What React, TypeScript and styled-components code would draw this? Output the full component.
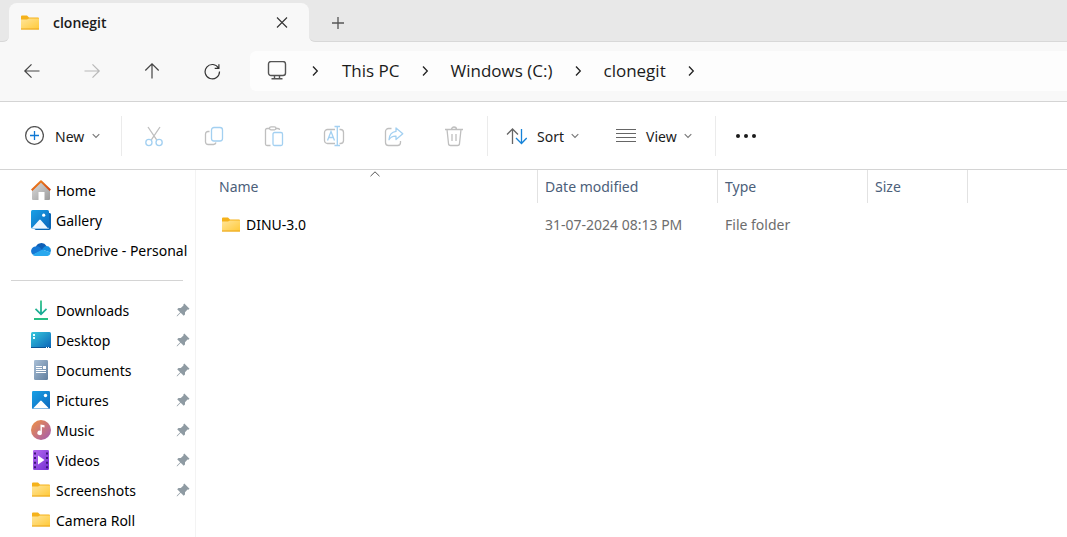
import React from 'react';
import styled, { createGlobalStyle } from 'styled-components';

const GlobalStyle = createGlobalStyle`
  * { box-sizing: border-box; }
  body {
    margin: 0;
    background: #ffffff;
    color: #1b1b1b;
    font-family: 'Noto Sans', 'Open Sans', sans-serif;
    font-size: 14px;
    line-height: 20px;
  }
  svg { display: block; flex: none; }
  button { font: inherit; color: inherit; background: none; border: 0; padding: 0; cursor: pointer; }
  button:disabled { cursor: default; }
`;

const Explorer = styled.div`
  display: flex;
  flex-direction: column;
  min-height: 100vh;
`;

/* Title bar with tabs */
const TabBar = styled.header`
  display: flex;
  height: 42px;
  background: #f8f8f8;
`;

const TabBarStart = styled.div`
  width: 9px;
  background: #e8e8e8;
  border-bottom: 1px solid #d8d8d8;
  border-bottom-right-radius: 6px;
`;

const TabSlot = styled.div`
  flex: 0 1 300px;
  padding-top: 3px;
  background: linear-gradient(#e8e8e8 16px, #f8f8f8 16px);
`;

const Tab = styled.div`
  display: flex;
  align-items: center;
  height: 39px;
  padding: 0 20px 0 11px;
  background: #f8f8f8;
  border-radius: 8px 8px 0 0;
`;

const TabTitle = styled.span`
  flex: 1;
  margin-left: 13px;
  font-family: 'Open Sans', sans-serif;
  font-weight: 600;
`;

const TabBarRest = styled.div`
  display: flex;
  align-items: center;
  flex: 1;
  padding: 4px 0 0 22px;
  background: #e8e8e8;
  border-bottom: 1px solid #d8d8d8;
  border-bottom-left-radius: 6px;
`;

const IconButton = styled.button`
  display: flex;
  align-items: center;
  justify-content: center;
`;

/* Address row */
const NavBar = styled.nav`
  display: flex;
  align-items: flex-start;
  height: 60px;
  padding: 9px 0 0 2px;
  background: #f8f8f8;
  border-bottom: 1px solid #d4d4d4;
`;

const NavButton = styled(IconButton)`
  width: 60px;
  height: 40px;
`;

const AddressBar = styled.ol`
  display: flex;
  align-items: center;
  flex: 1;
  height: 40px;
  margin: 0 0 0 8px;
  padding: 0 0 0 17px;
  list-style: none;
  background: #fdfdfd;
  border-radius: 6px 0 0 6px;
`;

const Crumb = styled.li`
  display: flex;
  align-items: center;
`;

const CrumbLink = styled.a`
  color: #1b1b1b;
  text-decoration: none;
  font-family: 'Open Sans', sans-serif;
  font-size: 17px;
  line-height: 24px;
`;

const CrumbArrow = styled.span<{ $wide?: boolean }>`
  display: flex;
  justify-content: center;
  width: ${({ $wide }) => ($wide ? 55 : 51)}px;
`;

/* Command bar */
const CommandBar = styled.div`
  display: flex;
  align-items: center;
  height: 68px;
  border-bottom: 1px solid #d4d4d4;
`;

const CommandGroup = styled.div<{ $width: number; $gap?: number; $indent?: number }>`
  display: flex;
  align-items: center;
  gap: ${({ $gap = 0 }) => $gap}px;
  width: ${({ $width }) => $width}px;
  height: 40px;
  padding-left: ${({ $indent = 0 }) => $indent}px;
  border-right: 1px solid #ebebeb;
`;

const Command = styled.button<{ $gap: number }>`
  display: flex;
  align-items: center;
  gap: ${({ $gap }) => $gap}px;
  height: 40px;
`;

const CommandLabel = styled.span`
  padding-top: 2px;
  margin-right: -3px;
`;

const ToolButton = styled(IconButton)`
  width: 60px;
  height: 40px;
`;

/* Body */
const Body = styled.div`
  display: flex;
  flex: 1;
`;

const Sidebar = styled.aside`
  flex: 0 0 196px;
  padding-top: 5px;
  border-right: 1px solid #f3f3f3;
`;

const PlaceList = styled.ul`
  margin: 0;
  padding: 0;
  list-style: none;
`;

const Place = styled.li`
  display: flex;
  align-items: center;
  height: 30px;
  padding: 0 5px 0 31px;
`;

const PlaceLink = styled.a`
  display: flex;
  align-items: center;
  gap: 5px;
  flex: 1;
  color: #000000;
  text-decoration: none;
  white-space: nowrap;
`;

const PlaceLabel = styled.span`
  padding-top: 2px;
`;

const Divider = styled.hr`
  height: 1px;
  margin: 15px 12px 14px 11px;
  border: 0;
  background: #d4d4d4;
`;

const Files = styled.main`
  flex: 1;
`;

const FileTable = styled.table`
  table-layout: fixed;
  width: 772px;
  border-collapse: separate;
  border-spacing: 0;
`;

const HeaderCell = styled.th<{ $width: number; $indent?: number }>`
  width: ${({ $width }) => $width}px;
  height: 33px;
  padding: 0 0 0 ${({ $indent = 7 }) => $indent}px;
  border-right: 1px solid #e2e2e2;
  color: #4c607a;
  font-weight: 400;
  text-align: left;
  vertical-align: top;
`;

const SortMark = styled.span`
  display: flex;
  justify-content: center;
  height: 7px;
  padding-top: 1px;
  margin-right: 7px;
`;

const Cell = styled.td<{ $indent?: number }>`
  height: 43px;
  padding: 0 0 0 ${({ $indent = 7 }) => $indent}px;
  color: #6d6d6d;
`;

const FileName = styled.span`
  display: flex;
  align-items: center;
  gap: 5px;
  color: #000000;
`;

/* Icons */
const FolderIcon = () => (
  <svg width="20" height="20" viewBox="0 0 20 20">
    <defs>
      <linearGradient id="folder" x1="0" y1="0" x2="1" y2="1">
        <stop offset="0" stopColor="#ffe59a" />
        <stop offset="1" stopColor="#ffc937" />
      </linearGradient>
    </defs>
    <path d="M1 3.500a1 1 0 0 1 1-1h5l2 2h9a1 1 0 0 1 1 1v3H1z" fill="#f5b21b" />
    <path d="M1 6.500h6l2-1h10v10.500a.5.5 0 0 1-.5.5h-17a.5.5 0 0 1-.5-.5z" fill="url(#folder)" />
    <path d="M1 16h18" stroke="#eaa51c" />
  </svg>
);

const Chevron = ({ down = false }: { down?: boolean }) =>
  down ? (
    <svg width="8" height="6" viewBox="0 0 8 6" fill="none" stroke="#777" strokeWidth="1.100">
      <path d="M.7 1.200 4 4.500l3.300-3.300" />
    </svg>
  ) : (
    <svg width="8" height="12" viewBox="0 0 8 12" fill="none" stroke="#222" strokeWidth="1.300">
      <path d="m2 1.500 4.300 4.500L2 10.500" />
    </svg>
  );

const Arrow = ({ turn = 0, color = '#444' }: { turn?: number; color?: string }) => (
  <svg width="18" height="18" viewBox="0 0 18 18" fill="none" stroke={color} strokeWidth="1.200">
    <path transform={`rotate(${turn} 9 9)`} d="M16.500 9H2M8.500 2.300 1.800 9l6.700 6.700" />
  </svg>
);

const RefreshIcon = () => (
  <svg width="18" height="18" viewBox="0 0 18 18" fill="none" stroke="#333" strokeWidth="1.200">
    <path d="M15.600 6.200A7.200 7.200 0 1 0 16.500 9.500M15.900 2.200V6.300h-4.200" />
  </svg>
);

const MonitorIcon = () => (
  <svg width="20" height="20" viewBox="0 0 20 20" fill="none" stroke="#555" strokeWidth="1.400">
    <rect x="1.500" y=".5" width="17" height="14" rx="2.500" />
    <path d="M7.500 14.500v3M12.500 14.500v3M4.500 17.700h11" />
  </svg>
);

const GREY = '#bfbfbf';
const BLUE = '#a3d0f1';

const tool = (children: React.ReactNode) => (
  <svg width="22" height="22" viewBox="0 0 22 22" fill="none" stroke={GREY} strokeWidth="1.300">
    {children}
  </svg>
);

const tools = [
  {
    label: 'Cut',
    icon: tool(
      <>
        <path d="M5 2l8.700 12.800M17 2 8.300 14.800" />
        <circle cx="5.900" cy="17.500" r="3.100" stroke={BLUE} />
        <circle cx="16.100" cy="17.500" r="3.100" stroke={BLUE} />
      </>
    ),
  },
  {
    label: 'Copy',
    icon: tool(
      <>
        <path d="M6.500 6.500H5a2.500 2.500 0 0 0-2.500 2.500v8A2.700 2.700 0 0 0 5.200 19.500h5.300a2.700 2.700 0 0 0 2.500-2" />
        <rect x="8.500" y="2.500" width="11" height="13.500" rx="2.500" stroke={BLUE} />
      </>
    ),
  },
  {
    label: 'Paste',
    icon: tool(
      <>
        <path d="M6.500 3.500H4A1.500 1.500 0 0 0 2.500 5v14A1.500 1.500 0 0 0 4 20.500h3.500M12.500 3.500H15A1.500 1.500 0 0 1 16.500 5" />
        <rect x="6.500" y="1.800" width="6.500" height="3" rx="1.500" />
        <rect x="10" y="7.500" width="9.500" height="13" rx="1.500" stroke={BLUE} />
      </>
    ),
  },
  {
    label: 'Rename',
    icon: tool(
      <>
        <path d="M12 18.500H4.500a3 3 0 0 1-3-3v-8a3 3 0 0 1 3-3H12M16.500 4.500h1a3 3 0 0 1 3 3v8a3 3 0 0 1-3 3h-1" />
        <path d="m4.500 15.500 3.500-9 3.500 9M5.700 12.500h4.600M14.300 1.500v19M11.500 1.500h5.500M11.500 20.500h5.500" stroke={BLUE} />
      </>
    ),
  },
  {
    label: 'Share',
    icon: tool(
      <>
        <path d="M8.500 3.500h-3a3 3 0 0 0-3 3v11a3 3 0 0 0 3 3h9a3 3 0 0 0 3-3V16" />
        <path
          d="M13 3l6.800 5.700L13 14.500V11.200c-3.300-.2-5.300.8-7 3.500.3-4.800 2.500-7.700 7-8.300z"
          stroke={BLUE}
          strokeLinejoin="round"
        />
      </>
    ),
  },
  {
    label: 'Delete',
    icon: tool(
      <path d="M2 4.500h18M8.500 4.500a2.500 2.500 0 0 1 5 0M4 4.500l1.500 14a2 2 0 0 0 2 2h7a2 2 0 0 0 2-2l1.500-14M9 9v7M13 9v7" />
    ),
  },
];

const NewIcon = () => (
  <svg width="20" height="20" viewBox="0 0 20 20" fill="none" strokeWidth="1.300">
    <circle cx="10.500" cy="9.500" r="8.900" stroke="#555" />
    <path d="M10.500 5v9M6 9.500h9" stroke="#0f78d4" strokeWidth="1.300" />
  </svg>
);

const SortIcon = () => (
  <svg width="21" height="18" viewBox="0 0 21 18" fill="none" strokeWidth="1.300">
    <path d="M6.500 17V2.500M1 7.500l5.500-5.500L12 7.500" stroke="#666" />
    <path d="M15.500 2v14M10 11l5.500 5.500L20.700 11" stroke="#1683d8" />
  </svg>
);

const ViewIcon = () => (
  <svg width="20" height="16" viewBox="0 0 20 16" stroke="#666" strokeWidth="1.200">
    <path d="M0 1.500h20M0 5.500h20M0 9.500h20M0 13.500h20" />
  </svg>
);

const MoreIcon = () => (
  <svg width="22" height="6" viewBox="0 0 22 6" fill="#1b1b1b">
    <circle cx="3" cy="3" r="2" />
    <circle cx="11" cy="3" r="2" />
    <circle cx="19" cy="3" r="2" />
  </svg>
);

const PinIcon = () => (
  <svg width="14" height="14" viewBox="0 0 14 14" fill="#8f9ba3">
    <path d="M8.300.5 13.500 5.700 12.300 6.700 11.500 6.500 9 9.200 9 11.500 7.700 12.800 4.700 9.800 1.500 13 .6 13.400 1 12.500 4.200 9.300 1.200 6.300 2.500 5 4.800 5 7.500 2.500 7.300 1.700Z" />
  </svg>
);

const place = (children: React.ReactNode) => (
  <svg width="20" height="20" viewBox="0 0 20 20">
    {children}
  </svg>
);

const Gradient = ({ id, from, to }: { id: string; from: string; to: string }) => (
  <linearGradient id={id} x1="0" y1="0" x2="1" y2="1">
    <stop offset="0" stopColor={from} />
    <stop offset="1" stopColor={to} />
  </linearGradient>
);

const HomeIcon = place(
  <>
    <Gradient id="wall" from="#dcdcdc" to="#9b9b9b" />
    <Gradient id="roof" from="#f58a1f" to="#cf4516" />
    <path d="M1 9.500 10 2l9 7.500V19a1 1 0 0 1-1 1h-4.500v-8h-6v8H2a1 1 0 0 1-1-1z" fill="url(#wall)" />
    <path d="m.7 10.300 9.300-9 9.300 9" fill="none" stroke="url(#roof)" strokeWidth="2" strokeLinejoin="round" />
  </>
);

const GalleryIcon = place(
  <>
    <Gradient id="photo" from="#19a1e6" to="#0d68bd" />
    <path d="M18 3a1.500 1.500 0 0 1 2 1.500V18a2 2 0 0 1-2 2H5a2 2 0 0 1-1.700-1.500" fill="#0b66b3" />
    <rect width="18" height="19" rx="1.500" fill="#fff" />
    <rect width="18" height="18.500" rx="1.500" fill="url(#photo)" />
    <path d="M.8 18.300 8.200 10a1 1 0 0 1 1.500 0l7.300 8.300z" fill="#eef7ff" />
    <circle cx="12.700" cy="5.200" r="1.600" fill="#fff" />
  </>
);

const OneDriveIcon = place(
  <>
    <path d="M4.500 8A6 6 0 0 1 15.500 6l-3 5z" fill="#0f5fb5" />
    <path d="M4.500 6.500A4.600 4.600 0 0 0 2 14.800l10-4.300L8.800 7.200a5 5 0 0 0-4.300-.7z" fill="#1577d4" />
    <path d="M15.500 6a4.500 4.500 0 0 1 3.900 6.500L11 9.500 13 7a5 5 0 0 1 2.500-1z" fill="#168fe0" />
    <path d="M1.500 14.700 10.500 10a3 3 0 0 1 2 0l7 2.600A3.500 3.500 0 0 1 16.500 16H4.500a4.500 4.500 0 0 1-3-1.300z" fill="#29a8ee" />
  </>
);

const DownloadsIcon = place(
  <>
    <linearGradient id="down" x1="0" y1="0" x2="0" y2="1">
      <stop offset="0" stopColor="#35c48a" />
      <stop offset="1" stopColor="#12a596" />
    </linearGradient>
    <path d="M9.100.5h1.800v11.800l4-4 1.200 1.200-6.100 6-6.100-6 1.200-1.200 4 4z" fill="url(#down)" />
    <path d="M3 19h14" stroke="#27bd83" strokeWidth="2" />
  </>
);

const DesktopIcon = place(
  <>
    <Gradient id="desk" from="#35c8dc" to="#0b63b8" />
    <rect y="2" width="20" height="16" rx="1.500" fill="url(#desk)" />
    <path d="M2 4h2v2H2zM2 7h2v2H2z" fill="#e7ffff" />
    <path d="M0 17.500h20" stroke="#0a5496" />
    <path d="M15 17.500h1M17 17.500h1" stroke="#fff" />
  </>
);

const DocumentsIcon = place(
  <>
    <Gradient id="doc" from="#a9bfd6" to="#617f9f" />
    <rect x="3" y="0" width="14" height="20" rx="1.200" fill="url(#doc)" />
    <path d="M5 6.500h6M5 8.500h6M5 10.500h10M5 12.500h10" stroke="#fff" />
    <path d="M12 6h3v3h-3z" fill="#fff" />
  </>
);

const PicturesIcon = place(
  <>
    <rect x="1" y="1" width="18" height="18" rx="1.200" fill="url(#photo)" />
    <path d="M2 18.500 9.200 11a1 1 0 0 1 1.500 0L18 18.500z" fill="#fff" />
    <circle cx="14.500" cy="5.500" r="1.700" fill="#fff" />
  </>
);

const MusicIcon = place(
  <>
    <Gradient id="music" from="#f19140" to="#a25bb4" />
    <circle cx="10" cy="10" r="10" fill="url(#music)" />
    <path d="M9.500 4.500 13.500 5.300V7.500L10.900 7V12.500A2.300 2.300 0 1 1 9.500 10.700z" fill="#fff" />
  </>
);

const VideosIcon = place(
  <>
    <Gradient id="video" from="#b46af0" to="#7430d2" />
    <rect x="2" width="16" height="20" rx="1.200" fill="url(#video)" />
    <path d="M4 2.500v16M16 2.500v16" stroke="#3d157a" strokeWidth="2" strokeDasharray="2 2.600" />
    <path d="M7 5.500v9L13.500 10z" fill="#fff" />
  </>
);

type PlaceItem = { label: string; icon: React.ReactNode; pinned?: boolean };

const roots: PlaceItem[] = [
  { label: 'Home', icon: HomeIcon },
  { label: 'Gallery', icon: GalleryIcon },
  { label: 'OneDrive - Personal', icon: OneDriveIcon },
];

const quickAccess: PlaceItem[] = [
  { label: 'Downloads', icon: DownloadsIcon, pinned: true },
  { label: 'Desktop', icon: DesktopIcon, pinned: true },
  { label: 'Documents', icon: DocumentsIcon, pinned: true },
  { label: 'Pictures', icon: PicturesIcon, pinned: true },
  { label: 'Music', icon: MusicIcon, pinned: true },
  { label: 'Videos', icon: VideosIcon, pinned: true },
  { label: 'Screenshots', icon: <FolderIcon />, pinned: true },
  { label: 'Camera Roll', icon: <FolderIcon /> },
];

const Places = ({ items }: { items: PlaceItem[] }) => (
  <PlaceList>
    {items.map(({ label, icon, pinned }) => (
      <Place key={label}>
        <PlaceLink href="#">
          {icon}
          <PlaceLabel>{label}</PlaceLabel>
        </PlaceLink>
        {pinned && <PinIcon />}
      </Place>
    ))}
  </PlaceList>
);

export default function App() {
  return (
    <Explorer>
      <GlobalStyle />
      <TabBar>
        <TabBarStart />
        <TabSlot>
          <Tab>
            <FolderIcon />
            <TabTitle>clonegit</TabTitle>
            <IconButton aria-label="Close tab">
              <svg width="14" height="14" viewBox="0 0 14 14" stroke="#333" strokeWidth="1.100">
                <path d="m2 1.500 10 10M12 1.500l-10 10" />
              </svg>
            </IconButton>
          </Tab>
        </TabSlot>
        <TabBarRest>
          <IconButton aria-label="New tab">
            <svg width="14" height="14" viewBox="0 0 14 14" stroke="#555" strokeWidth="1.300">
              <path d="M7 1v12M1 7h12" />
            </svg>
          </IconButton>
        </TabBarRest>
      </TabBar>

      <NavBar>
        <NavButton aria-label="Back"><Arrow /></NavButton>
        <NavButton aria-label="Forward" disabled><Arrow turn={180} color="#b8b8b8" /></NavButton>
        <NavButton aria-label="Up"><Arrow turn={90} /></NavButton>
        <NavButton aria-label="Refresh"><RefreshIcon /></NavButton>
        <AddressBar>
          <Crumb><MonitorIcon /><CrumbArrow $wide><Chevron /></CrumbArrow></Crumb>
          {['This PC', 'Windows (C:)', 'clonegit'].map((name) => (
            <Crumb key={name}>
              <CrumbLink href="#">{name}</CrumbLink>
              <CrumbArrow><Chevron /></CrumbArrow>
            </Crumb>
          ))}
        </AddressBar>
      </NavBar>

      <CommandBar>
        <CommandGroup $width={122} $indent={24}>
          <Command $gap={11}>
            <NewIcon /><CommandLabel>New</CommandLabel><Chevron down />
          </Command>
        </CommandGroup>
        <CommandGroup $width={366} $indent={2}>
          {tools.map(({ label, icon }) => (
            <ToolButton key={label} aria-label={label} disabled>{icon}</ToolButton>
          ))}
        </CommandGroup>
        <CommandGroup $width={228} $indent={18} $gap={37}>
          <Command $gap={10}>
            <SortIcon /><CommandLabel>Sort</CommandLabel><Chevron down />
          </Command>
          <Command $gap={10}>
            <ViewIcon /><CommandLabel>View</CommandLabel><Chevron down />
          </Command>
        </CommandGroup>
        <ToolButton aria-label="See more"><MoreIcon /></ToolButton>
      </CommandBar>

      <Body>
        <Sidebar>
          <Places items={roots} />
          <Divider />
          <Places items={quickAccess} />
        </Sidebar>
        <Files>
          <FileTable>
            <thead>
              <tr>
                <HeaderCell $width={342} $indent={23}>
                  <SortMark>
                    <svg width="10" height="6" viewBox="0 0 10 6" fill="none" stroke="#555">
                      <path d="M.5 5.200 5 .8l4.500 4.400" />
                    </svg>
                  </SortMark>
                  Name
                </HeaderCell>
                {[['Date modified', 180], ['Type', 150], ['Size', 100]].map(([label, width]) => (
                  <HeaderCell key={label} $width={Number(width)}>
                    <SortMark />
                    {label}
                  </HeaderCell>
                ))}
              </tr>
            </thead>
            <tbody>
              <tr>
                <Cell $indent={25}><FileName><FolderIcon />DINU-3.0</FileName></Cell>
                <Cell>31-07-2024 08:13 PM</Cell>
                <Cell>File folder</Cell>
                <Cell />
              </tr>
            </tbody>
          </FileTable>
        </Files>
      </Body>
    </Explorer>
  );
}
